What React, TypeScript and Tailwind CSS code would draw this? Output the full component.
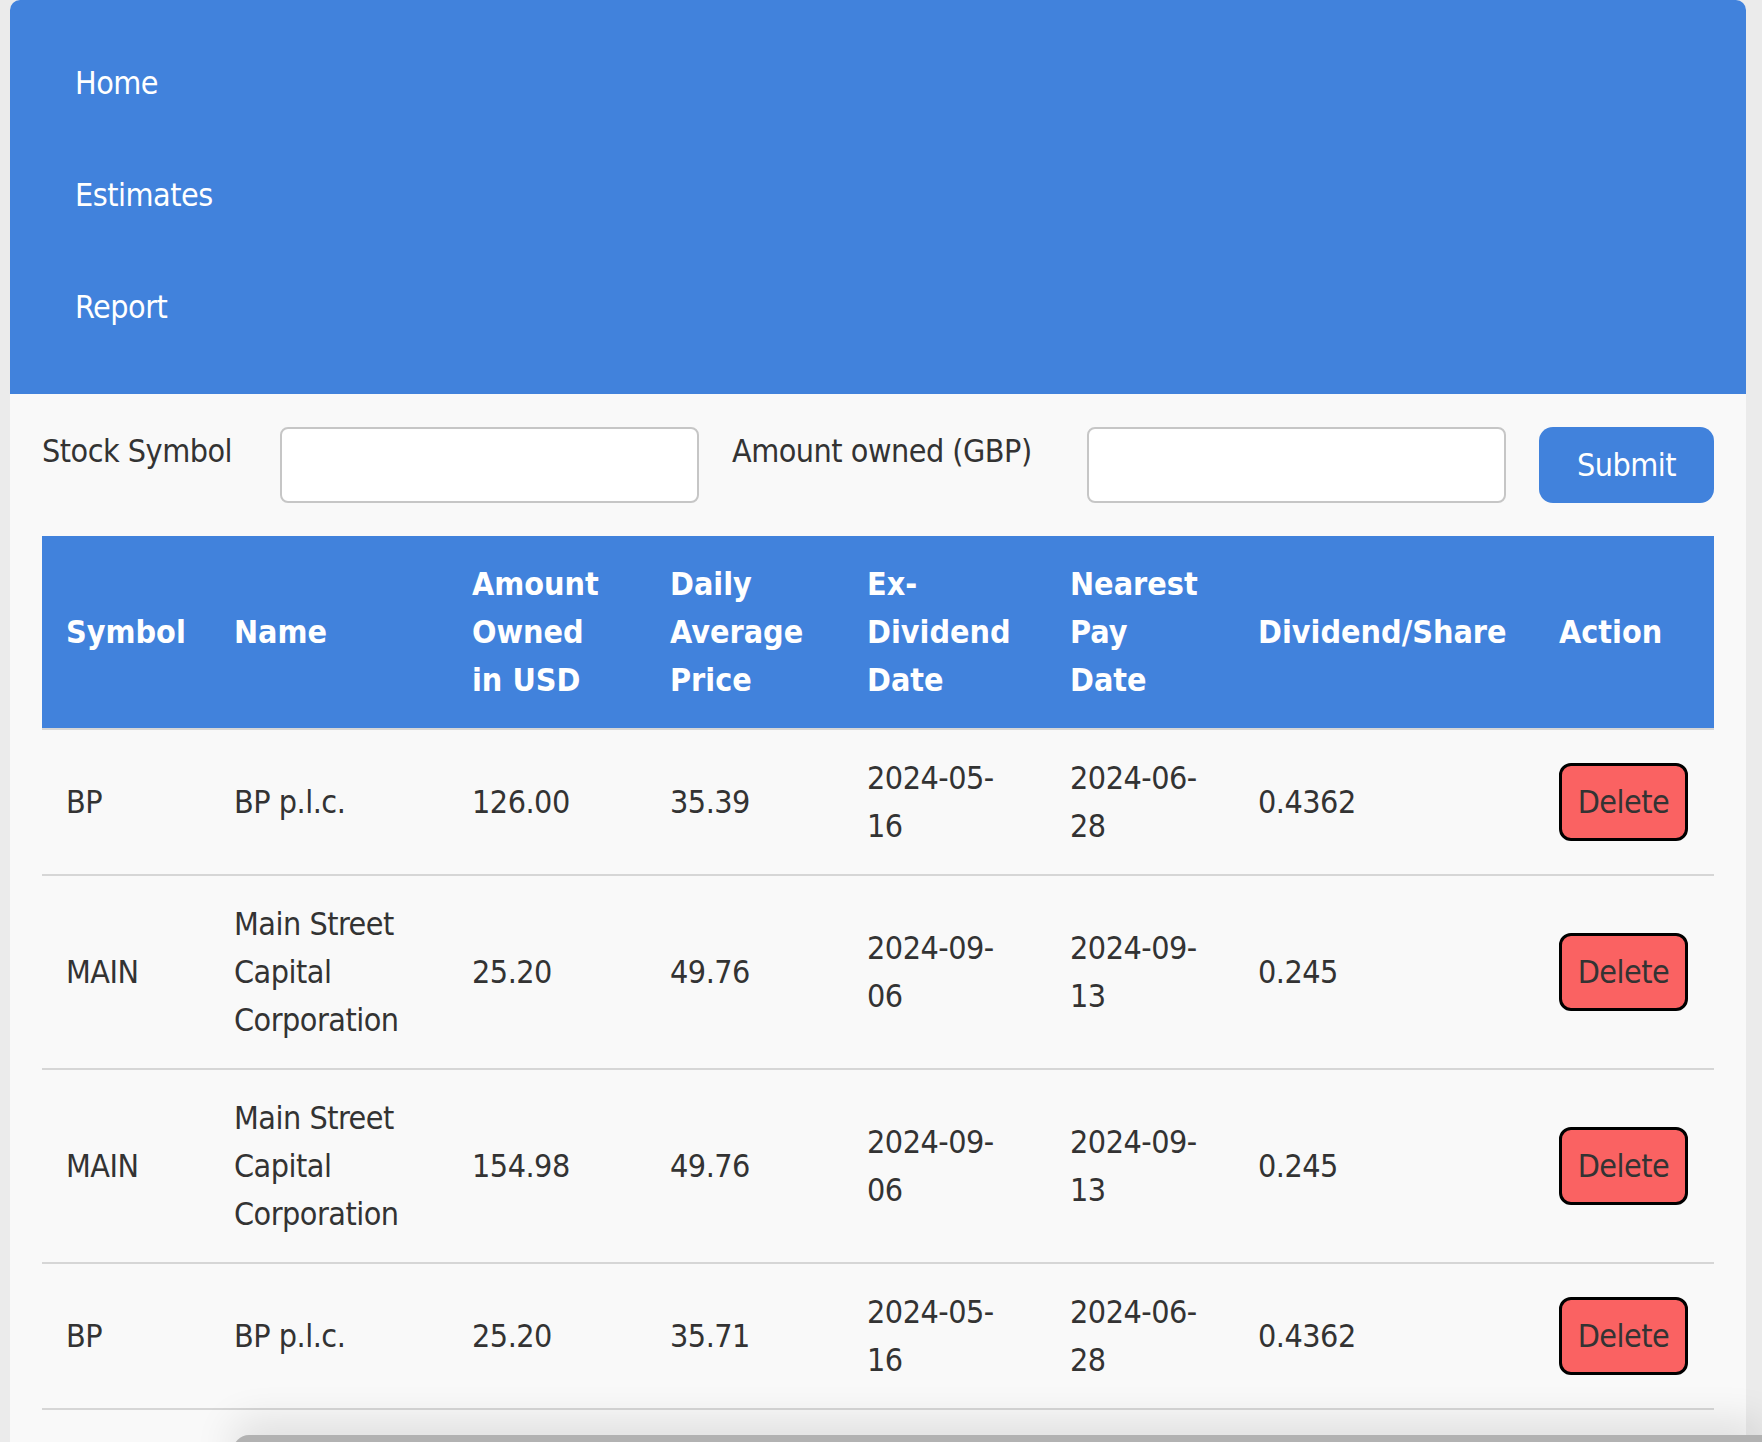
import React from 'react';

const font = { fontFamily: '"DejaVu Sans Condensed", "DejaVu Sans", sans-serif' };

const navItems = ['Home', 'Estimates', 'Report'];

const columns = [
    { w: 'w-[168px]', label: ['Symbol'] },
    { w: 'w-[238px]', label: ['Name'] },
    { w: 'w-[198px]', label: ['Amount', 'Owned', 'in USD'] },
    { w: 'w-[197px]', label: ['Daily', 'Average', 'Price'] },
    { w: 'w-[203px]', label: ['Ex-', 'Dividend', 'Date'] },
    { w: 'w-[188px]', label: ['Nearest', 'Pay', 'Date'] },
    { w: 'w-[301px]', label: ['Dividend/Share'] },
    { w: 'w-[179px]', label: ['Action'] },
];

const holdings = [
    { symbol: 'BP', name: ['BP p.l.c.'], amount: '126.00', avg: '35.39', ex: ['2024-05-', '16'], pay: ['2024-06-', '28'], div: '0.4362' },
    { symbol: 'MAIN', name: ['Main Street', 'Capital', 'Corporation'], amount: '25.20', avg: '49.76', ex: ['2024-09-', '06'], pay: ['2024-09-', '13'], div: '0.245' },
    { symbol: 'MAIN', name: ['Main Street', 'Capital', 'Corporation'], amount: '154.98', avg: '49.76', ex: ['2024-09-', '06'], pay: ['2024-09-', '13'], div: '0.245' },
    { symbol: 'BP', name: ['BP p.l.c.'], amount: '25.20', avg: '35.71', ex: ['2024-05-', '16'], pay: ['2024-06-', '28'], div: '0.4362' },
];

function Lines({ lines }: { lines: string[] }) {
    return (
        <>
            {lines.map((l, i) => (
                <React.Fragment key={i}>
                    {i > 0 && <br />}
                    {l}
                </React.Fragment>
            ))}
        </>
    );
}

export default function App() {
    return (
        <div className="relative w-[1762px] h-[1442px] overflow-hidden bg-[#ebebeb] text-[32px] leading-[48px] tracking-[-0.5px]" style={font}>
            <div className="ml-[10px] w-[1736px] h-full bg-[#f9f9f9] rounded-t-[10px] overflow-hidden">
                {/* Nav */}
                <header className="bg-[#4182dc] pt-[27px] pb-[31px] pl-[65px]">
                    {navItems.map(item => (
                        <div key={item} className="h-[112px] flex items-center text-white">
                            {item}
                        </div>
                    ))}
                </header>

                <main className="px-[32px] pt-[33px]">
                    {/* Add holding form */}
                    <form className="flex items-start gap-[33px] text-[#333]">
                        <label className="w-[205px] shrink-0">Stock Symbol</label>
                        <input className="flex-1 min-w-0 h-[76px] bg-white border-2 border-[#c6c6c6] rounded-[8px]" />
                        <label className="w-[322px] shrink-0">Amount owned (GBP)</label>
                        <input className="flex-1 min-w-0 h-[76px] bg-white border-2 border-[#c6c6c6] rounded-[8px]" />
                        <button type="button" className="w-[175px] h-[76px] shrink-0 bg-[#4182dc] text-white rounded-[14px]">
                            Submit
                        </button>
                    </form>

                    {/* Holdings */}
                    <table className="mt-[33px] w-full table-fixed border-collapse">
                        <colgroup>
                            {columns.map((c, i) => (
                                <col key={i} className={c.w} />
                            ))}
                        </colgroup>
                        <thead>
                            <tr className="bg-[#4182dc] text-white border-b-2 border-[#d6d6d6]">
                                {columns.map((c, i) => (
                                    <th key={i} className="px-[24px] py-[24px] text-left font-bold tracking-normal align-middle whitespace-nowrap">
                                        <Lines lines={c.label} />
                                    </th>
                                ))}
                            </tr>
                        </thead>
                        <tbody className="text-[#333]">
                            {holdings.map((h, i) => (
                                <tr key={i} className="border-b-2 border-[#d6d6d6]">
                                    <td className="px-[24px] py-[24px] align-middle">{h.symbol}</td>
                                    <td className="px-[24px] py-[24px] align-middle whitespace-nowrap"><Lines lines={h.name} /></td>
                                    <td className="px-[24px] py-[24px] align-middle">{h.amount}</td>
                                    <td className="px-[24px] py-[24px] align-middle">{h.avg}</td>
                                    <td className="px-[24px] py-[24px] align-middle whitespace-nowrap"><Lines lines={h.ex} /></td>
                                    <td className="px-[24px] py-[24px] align-middle whitespace-nowrap"><Lines lines={h.pay} /></td>
                                    <td className="px-[24px] py-[24px] align-middle">{h.div}</td>
                                    <td className="px-[24px] py-[24px] align-middle">
                                        <button type="button" className="w-[129px] h-[78px] bg-[#fa6262] border-[3px] border-black rounded-[12px] text-[#333]">
                                            Delete
                                        </button>
                                    </td>
                                </tr>
                            ))}
                        </tbody>
                    </table>
                </main>
            </div>

            {/* edge of the window stacked underneath */}
            <div className="absolute left-[233px] right-0 top-[1435px] h-[40px] bg-[#b2b2b2] rounded-tl-[16px] shadow-[0_-12px_40px_rgba(0,0,0,0.12)]" />
        </div>
    );
}
